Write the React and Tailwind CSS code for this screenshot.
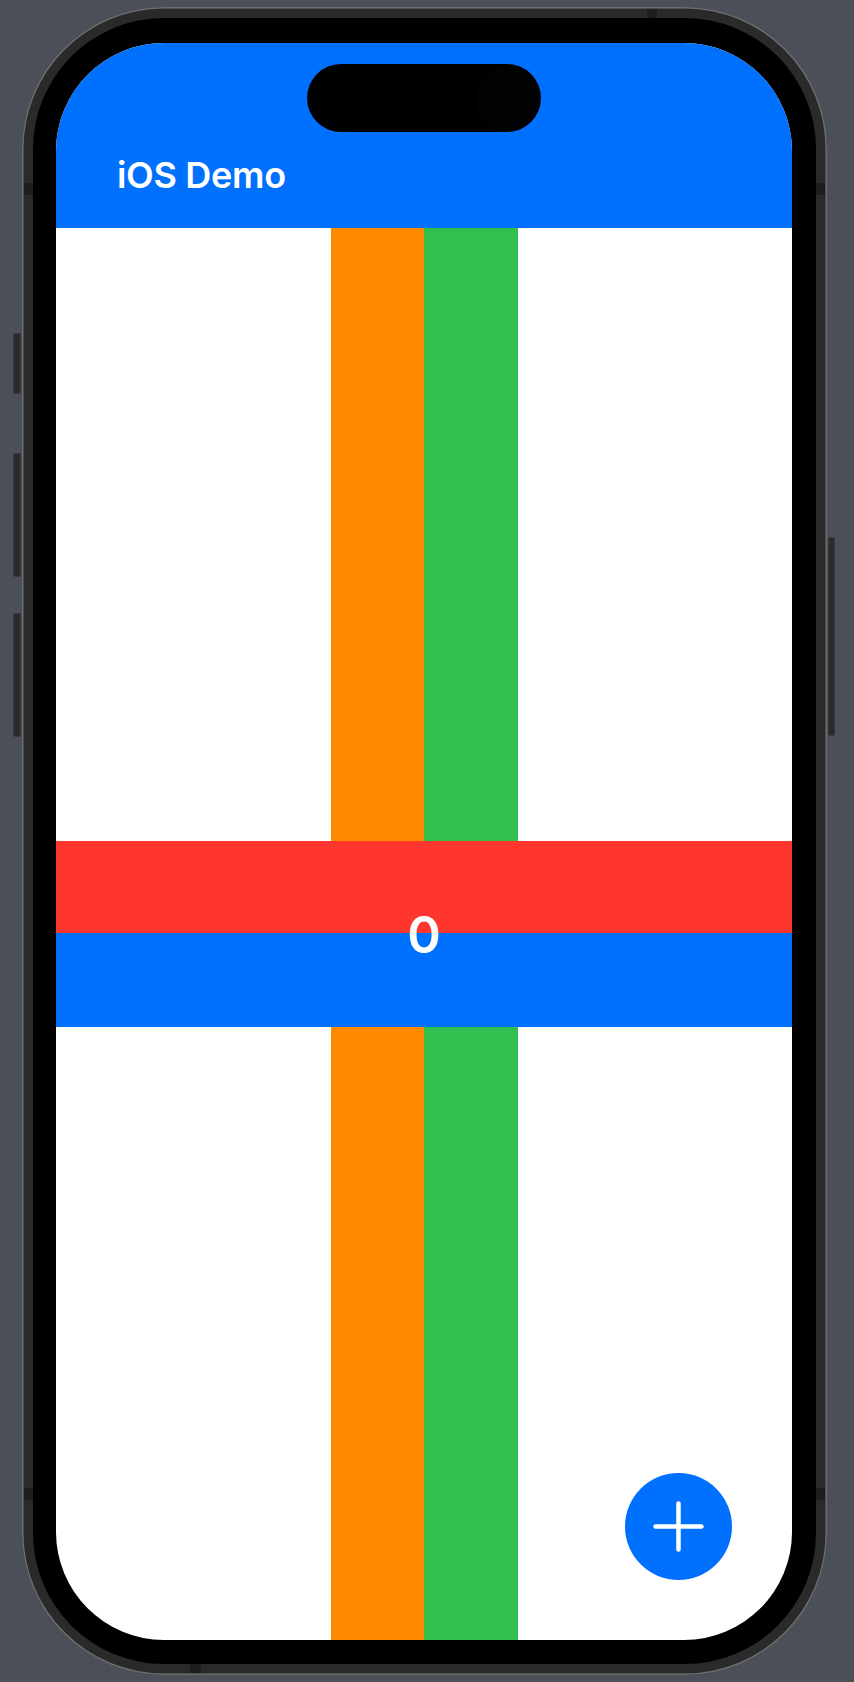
import React from "react";

const PlusIcon = () => (
  <svg width="107" height="107" viewBox="0 0 107 107" fill="none">
    <path
      d="M53.5 30.5v46M30.5 53.5h46"
      stroke="white"
      strokeWidth="4.5"
      strokeLinecap="round"
    />
  </svg>
);

export default function App() {
  return (
    <div
      className="w-[854px] h-[1682px] bg-[#4b5058] pl-[22px] pt-[7px] overflow-hidden"
      style={{ fontFamily: "Inter, 'Noto Sans', sans-serif" }}
    >
      {/* Phone body */}
      <div className="relative w-[805px] h-[1668px] rounded-[142px] bg-[#2a2a2a] p-[11px] shadow-[inset_0_0_0_1.5px_#6d6e70]">
        {/* side buttons */}
        <div className="absolute -left-[9px] top-[326px] w-[8px] h-[61px] rounded-l-[2px] bg-[#2a2a2a] border border-[#3b3c3e]" />
        <div className="absolute -left-[9px] top-[446px] w-[8px] h-[124px] rounded-l-[2px] bg-[#2a2a2a] border border-[#3b3c3e]" />
        <div className="absolute -left-[9px] top-[606px] w-[8px] h-[124px] rounded-l-[2px] bg-[#2a2a2a] border border-[#3b3c3e]" />
        <div className="absolute -right-[8px] top-[530px] w-[7px] h-[199px] rounded-r-[2px] bg-[#2a2a2a] border border-[#3b3c3e]" />

        {/* antenna lines */}
        <div className="absolute top-[2px] left-[625px] w-[10px] h-[9px] bg-[#1e1e1e]" />
        <div className="absolute left-[2px] top-[176px] w-[9px] h-[12px] bg-[#1e1e1e]" />
        <div className="absolute right-[2px] top-[176px] w-[9px] h-[12px] bg-[#1e1e1e]" />
        <div className="absolute left-[2px] top-[1481px] w-[9px] h-[12px] bg-[#1e1e1e]" />
        <div className="absolute right-[2px] top-[1481px] w-[9px] h-[12px] bg-[#1e1e1e]" />
        <div className="absolute bottom-[2px] left-[168px] w-[11px] h-[9px] bg-[#1e1e1e]" />

        {/* Bezel */}
        <div className="h-full rounded-[131px] bg-black pt-[25px] pl-[23px] pr-[24px] pb-[24px]">
          {/* Screen */}
          <div className="relative flex flex-col h-full rounded-[108px] overflow-hidden bg-white">
            {/* Header */}
            <div className="h-[185px] shrink-0 bg-[#0070ff] flex items-end pl-[61px] pb-[35px]">
              <h1 className="text-[36px] leading-none font-semibold text-white tracking-[-0.3px]">
                iOS Demo
              </h1>
            </div>

            {/* Content */}
            <div className="relative flex-1 grid">
              <div className="[grid-area:1/1] flex justify-center">
                <div className="w-[93px] bg-[#ff8a00]" />
                <div className="w-[94px] bg-[#31bf50]" />
              </div>
              <div className="[grid-area:1/1] flex flex-col justify-center">
                <div className="h-[92px] bg-[#ff362e]" />
                <div className="h-[94px] bg-[#0070ff]" />
              </div>
              <div className="[grid-area:1/1] flex items-center justify-center">
                <span className="text-[51px] leading-none font-semibold text-white">0</span>
              </div>

              {/* Floating add button */}
              <button className="absolute right-[60px] bottom-[60px] w-[107px] h-[107px] rounded-full bg-[#0070ff] flex items-center justify-center">
                <PlusIcon />
              </button>
            </div>

            {/* Dynamic island */}
            <div className="absolute top-[21px] left-1/2 -translate-x-1/2 w-[234px] h-[68px] rounded-full bg-black flex justify-end pr-[1px] pt-[1px]">
              <div className="w-[64px] h-[64px] rounded-full bg-[#020202] mr-[1px] mt-[1px]" />
            </div>
          </div>
        </div>
      </div>
    </div>
  );
}
